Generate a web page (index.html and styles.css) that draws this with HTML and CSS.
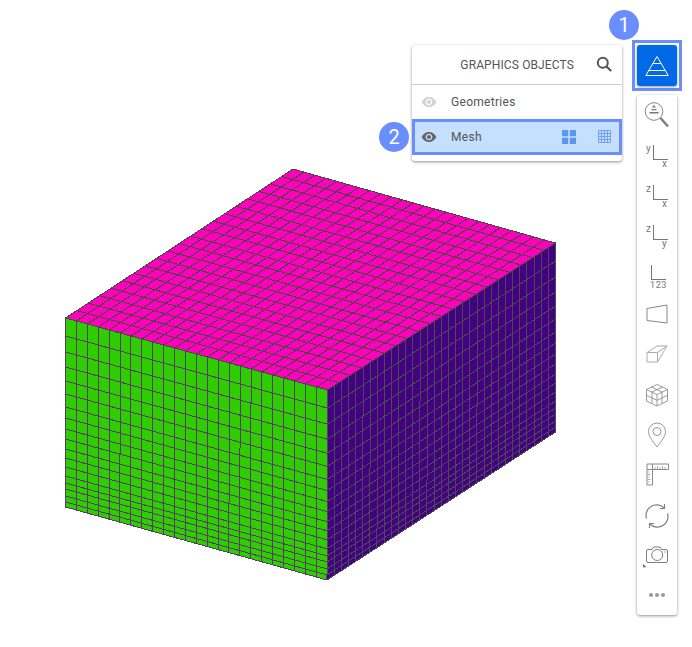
FILE: index.html
```html
<!DOCTYPE html>
<html lang="en">
<head>
<meta charset="utf-8">
<title>Graphics objects</title>
<link rel="stylesheet" href="styles.css">
</head>
<body>
<main class="stage">
  <svg id="mesh" class="mesh" width="692" height="647" viewBox="0 0 692 647" shape-rendering="crispEdges"></svg>
  <div class="dock">
    <section class="panel">
      <header class="panel-head">
        <h2 class="panel-title">GRAPHICS OBJECTS</h2>
        <svg class="search" width="18" height="18" viewBox="0 0 18 18"><circle cx="7.8" cy="6.8" r="5" fill="none" stroke="#555" stroke-width="2"/><path d="M11.5 10.5l4.7 4.5" stroke="#555" stroke-width="2.2" fill="none"/></svg>
      </header>
      <div class="row">
        <svg class="eye eye-off" width="16" height="16" viewBox="0 0 24 24"><path d="M12 4.5C7 4.5 2.73 7.61 1 12c1.73 4.39 6 7.5 11 7.5s9.27-3.11 11-7.5c-1.73-4.39-6-7.5-11-7.5zM12 17c-2.76 0-5-2.24-5-5s2.24-5 5-5 5 2.24 5 5-2.24 5-5 5zm0-8c-1.66 0-3 1.34-3 3s1.34 3 3 3 3-1.34 3-3-1.34-3-3-3z"/></svg>
        <span class="row-label">Geometries</span>
      </div>
      <div class="row row-selected">
        <span class="badge badge-two">2</span>
        <svg class="eye eye-on" width="16" height="16" viewBox="0 0 24 24"><path d="M12 4.5C7 4.5 2.73 7.61 1 12c1.73 4.39 6 7.5 11 7.5s9.27-3.11 11-7.5c-1.73-4.39-6-7.5-11-7.5zM12 17c-2.76 0-5-2.24-5-5s2.24-5 5-5 5 2.24 5 5-2.24 5-5 5zm0-8c-1.66 0-3 1.34-3 3s1.34 3 3 3 3-1.34 3-3-1.34-3-3-3z"/></svg>
        <span class="row-label">Mesh</span>
        <span class="row-actions">
          <svg width="14" height="14" viewBox="0 0 14 14"><path fill="#5c94f2" d="M0 0h6.2v6.2H0zM7.8 0H14v6.2H7.8zM0 7.8h6.2V14H0zM7.8 7.8H14V14H7.8z"/></svg>
          <svg width="14" height="14" viewBox="0 0 14 14"><path fill="none" stroke="#6fa0f5" stroke-width="1" d="M.5.5h12v12H.5zM3.5.5v12M6.5.5v12M9.5.5v12M.5 3.5h12M.5 6.5h12M.5 9.5h12"/></svg>
        </span>
      </div>
    </section>
    <div class="tools">
      <div class="active-frame">
        <span class="badge badge-one">1</span>
        <button class="active-btn" type="button" aria-label="Graphics objects">
          <svg width="26" height="22" viewBox="0 0 26 22"><path fill="none" stroke="#fff" stroke-width="1" d="M13 1.500L1.800 20.500h22.400zM8.900 8.500h8.200M4.700 15.500h16.600"/></svg>
        </button>
      </div>
      <nav class="toolbar">
        <svg class="i-zoom" width="28" height="34" viewBox="0 0 28 34"><circle cx="11" cy="11.500" r="8.800" fill="none" stroke="#888" stroke-width="1"/><path d="M17.500 18l7.500 8.500" stroke="#808080" stroke-width="2.600" fill="none"/><path fill="#777" d="M11 5l2 2.500H9zM8.500 9h5v1.300h-5zM6.500 12h9v1.500H6.500z"/></svg>
        <div class="axis axis-yx"><span class="ax-a">y</span><span class="ax-b">x</span></div>
        <div class="axis axis-zx"><span class="ax-a">z</span><span class="ax-b">x</span></div>
        <div class="axis axis-zy"><span class="ax-a">z</span><span class="ax-b">y</span></div>
        <div class="axis axis-123"><span class="ax-n">123</span></div>
        <svg class="i-trap" width="22" height="20" viewBox="0 0 22 20"><path fill="none" stroke="#888" d="M1 4.500L21 1v18L1 16.500z"/></svg>
        <svg class="i-box" width="22" height="20" viewBox="0 0 22 20"><path fill="none" stroke="#aaa" d="M1 8.500h10.500V18H1zM1 8.500L11 2h10l-9.500 16M11.500 8.500L21 2"/></svg>
        <svg class="i-cube" width="22" height="24" viewBox="0 0 22 24"><path fill="none" stroke="#909090" stroke-width=".9" d="M11 1.500l10.500 5v11.500L11 23 .5 18V6.500zM.5 6.500L11 11.500l10.500-5M11 11.500V23M5.500 4l10.500 5M16.500 4L6 9M.5 12.300L11 17.300l10.500-5M6 9V20.500M16 9V20.500"/></svg>
        <svg class="i-pin" width="20" height="26" viewBox="0 0 20 26"><path fill="none" stroke="#999" d="M10 25C6 19.500 1.500 14.500 1.500 9.500a8.500 8.500 0 0 1 17 0C18.500 14.500 14 19.500 10 25z"/><circle cx="10" cy="9.500" r="4" fill="none" stroke="#999"/></svg>
        <svg class="i-ruler" width="23" height="23" viewBox="0 0 23 23"><path fill="none" stroke="#888" d="M1 1h21.500v5.500H6.500V22H1zM1 6.500h5.500V1"/><path fill="none" stroke="#aaa" d="M9 6v-2M11.500 6v-3M14 6v-2M16.500 6v-3M19 6v-2M1.500 9h2M1.500 11.500h3M1.500 14h2M1.500 16.500h3M1.500 19h2"/></svg>
        <svg class="i-sync" width="24" height="26" viewBox="0 0 24 26"><path fill="none" stroke="#808080" stroke-width="1.200" d="M1.500 15.500A10.500 10.500 0 0 1 18.800 4.800M22.500 10.500A10.500 10.500 0 0 1 5.200 21.200"/><path fill="none" stroke="#808080" stroke-width="1.200" d="M19.500 1v4.500H15M4.500 25v-4.500H9"/></svg>
        <svg class="i-cam" width="27" height="22" viewBox="0 0 27 22"><path fill="none" stroke="#808080" d="M5 3.500h4L10.500 1h6.500l1.500 2.500h4.500a1.500 1.500 0 0 1 1.500 1.500V15a1.500 1.500 0 0 1-1.500 1.500H5A1.500 1.500 0 0 1 3.500 15V5A1.500 1.500 0 0 1 5 3.500z"/><circle cx="14.200" cy="9" r="5.500" fill="none" stroke="#808080"/><circle cx="22" cy="6" r=".8" fill="#999"/><path fill="#666" d="M0 18l3.500 3.300H0z"/></svg>
        <svg class="i-more" width="18" height="6" viewBox="0 0 18 6"><circle cx="3" cy="3" r="2" fill="#999"/><circle cx="9" cy="3" r="2" fill="#999"/><circle cx="15" cy="3" r="2" fill="#999"/></svg>
      </nav>
    </div>
  </div>
</main>
<script src="script.js"></script>
</body>
</html>
```
FILE: styles.css
```css
* { box-sizing: border-box; }
html, body { margin: 0; padding: 0; background: #fff; }
body { font-family: Roboto, "Liberation Sans", sans-serif; color: #555; }

.stage { position: relative; width: 692px; height: 647px; overflow: hidden; }
.mesh { position: absolute; top: 0; left: 0; }

.dock {
  position: relative;
  display: flex;
  justify-content: flex-end;
  align-items: flex-start;
  gap: 10px;
  padding: 40px 10px 0 0;
}

.panel {
  width: 210px;
  height: 116px;
  margin-top: 5px;
  background: #fff;
  border-radius: 3px;
  box-shadow: 0 1px 3px rgba(0, 0, 0, .45);
}
.panel-head {
  display: flex;
  align-items: center;
  justify-content: flex-end;
  height: 40px;
  padding-right: 9px;
  border-bottom: 1px solid #ccc;
}
.panel-title {
  margin: 0 21px 0 0;
  font-size: 12px;
  font-weight: 400;
  letter-spacing: .12px;
  color: #555;
}
.search { display: block; }

.row {
  position: relative;
  display: flex;
  align-items: center;
  height: 34px;
  padding-left: 9px;
}
.row-selected {
  height: 36px;
  padding-left: 6px;
  background: #c5e0ff;
  border: 3px solid #6b8eff;
}
.eye { flex: none; display: block; margin-right: 14px; }
.eye-off { fill: #d2d2d2; }
.eye-on { fill: #666; }
.row-label { font-size: 12px; letter-spacing: .3px; color: #555; }
.row-actions {
  display: flex;
  gap: 22px;
  margin-left: auto;
  padding-right: 7px;
}
.row-actions svg { display: block; }

.badge {
  position: absolute;
  display: flex;
  align-items: center;
  justify-content: center;
  width: 30px;
  height: 30px;
  border-radius: 50%;
  background: #6b8eff;
  color: #fff;
  font-size: 20px;
}
.badge-two { left: -36px; top: 0; }
.badge-one { left: -26px; top: -33px; }

.tools {
  display: flex;
  flex-direction: column;
  align-items: center;
  gap: 4px;
  width: 50px;
}
.active-frame {
  position: relative;
  width: 50px;
  height: 51px;
  padding: 2px;
  border: 3px solid #6b8eff;
  background: #fff;
}
.active-btn {
  display: flex;
  align-items: center;
  justify-content: center;
  width: 40px;
  height: 41px;
  padding: 0;
  border: 0;
  border-radius: 3px;
  background: #0069e6;
  box-shadow: 0 1px 3px rgba(0, 0, 0, .4);
}
.active-btn svg { display: block; }

.toolbar {
  position: relative;
  display: flex;
  flex-direction: column;
  align-items: center;
  width: 40px;
  height: 520px;
  padding-top: 5px;
  background: #fff;
  border-radius: 3px;
  box-shadow: 0 1px 3px rgba(0, 0, 0, .45);
}
.toolbar svg { display: block; flex: none; }

.axis {
  position: relative;
  flex: none;
  width: 24px;
  height: 24px;
  color: #777;
  font-size: 10px;
  line-height: 10px;
}
.axis::before {
  content: "";
  position: absolute;
  left: 8px;
  top: 0;
  width: 14px;
  height: 14px;
  border-left: 1px solid #777;
  border-bottom: 1px solid #777;
}
.ax-a { position: absolute; left: 1px; top: -1px; }
.ax-b { position: absolute; left: 17px; top: 14px; }
.axis-yx { margin-top: 11px; }
.axis-zx { margin-top: 16px; }
.axis-zy { margin-top: 16px; }
.axis-123 { margin-top: 16px; height: 26px; }
.axis-123::before { left: 6px; }
.ax-n { position: absolute; left: 5px; top: 15px; font-size: 9px; letter-spacing: .6px; }
.i-trap { margin-top: 13px; }
.i-box { margin-top: 20px; }
.i-cube { margin-top: 19px; }
.i-pin { margin-top: 15px; }
.i-ruler { margin-top: 15px; }
.i-sync { margin-top: 17px; }
.i-cam { margin: 17px 0 0 -2px; }
.i-more { margin-top: 24px; }
```
FILE: script.js
```js
// Builds the three faces of the meshed block from its corners and the graded row spacing.
(function () {
  var svg = document.getElementById('mesh');
  var NS = 'http://www.w3.org/2000/svg';
  var rowsPx = [318,336,352,367,381,394,407,418,429,439,449,458,467,476,483,489,496,502,507];
  var grade = rowsPx.map(function (y) { return (y - 318) / (507 - 318); });
  function uniform(n) { var a = []; for (var i = 0; i <= n; i++) a.push(i / n); return a; }
  function lerp(p, q, t) { return [p[0] + (q[0] - p[0]) * t, p[1] + (q[1] - p[1]) * t]; }
  function pt(c, u, v) { return lerp(lerp(c[0], c[1], u), lerp(c[3], c[2], u), v); }
  function face(c, us, vs, fill, stroke) {
    var d = '';
    var fmt = function (p) { return p[0].toFixed(2) + ' ' + p[1].toFixed(2); };
    us.forEach(function (u) { d += 'M' + fmt(pt(c, u, 0)) + 'L' + fmt(pt(c, u, 1)); });
    vs.forEach(function (v) { d += 'M' + fmt(pt(c, 0, v)) + 'L' + fmt(pt(c, 1, v)); });
    var poly = document.createElementNS(NS, 'polygon');
    poly.setAttribute('points', c.map(function (p) { return p.join(','); }).join(' '));
    poly.setAttribute('fill', fill);
    svg.appendChild(poly);
    var path = document.createElementNS(NS, 'path');
    path.setAttribute('d', d);
    path.setAttribute('fill', 'none');
    path.setAttribute('stroke', stroke);
    path.setAttribute('stroke-width', '1');
    svg.appendChild(path);
  }
  // right face
  face([[327.5,390],[555.5,243],[555.5,432],[327,580]], uniform(32), grade, '#430080', '#4a4a55');
  // front face
  face([[65.5,318],[327.5,390],[327,580],[65.5,507]], uniform(24), grade, '#2ecc00', '#5a3a6e');
  // top face
  face([[65.5,318],[327.5,390],[555.5,243],[293,169]], uniform(24), uniform(20), '#ff00bc', '#3f4a40');
})();
```
